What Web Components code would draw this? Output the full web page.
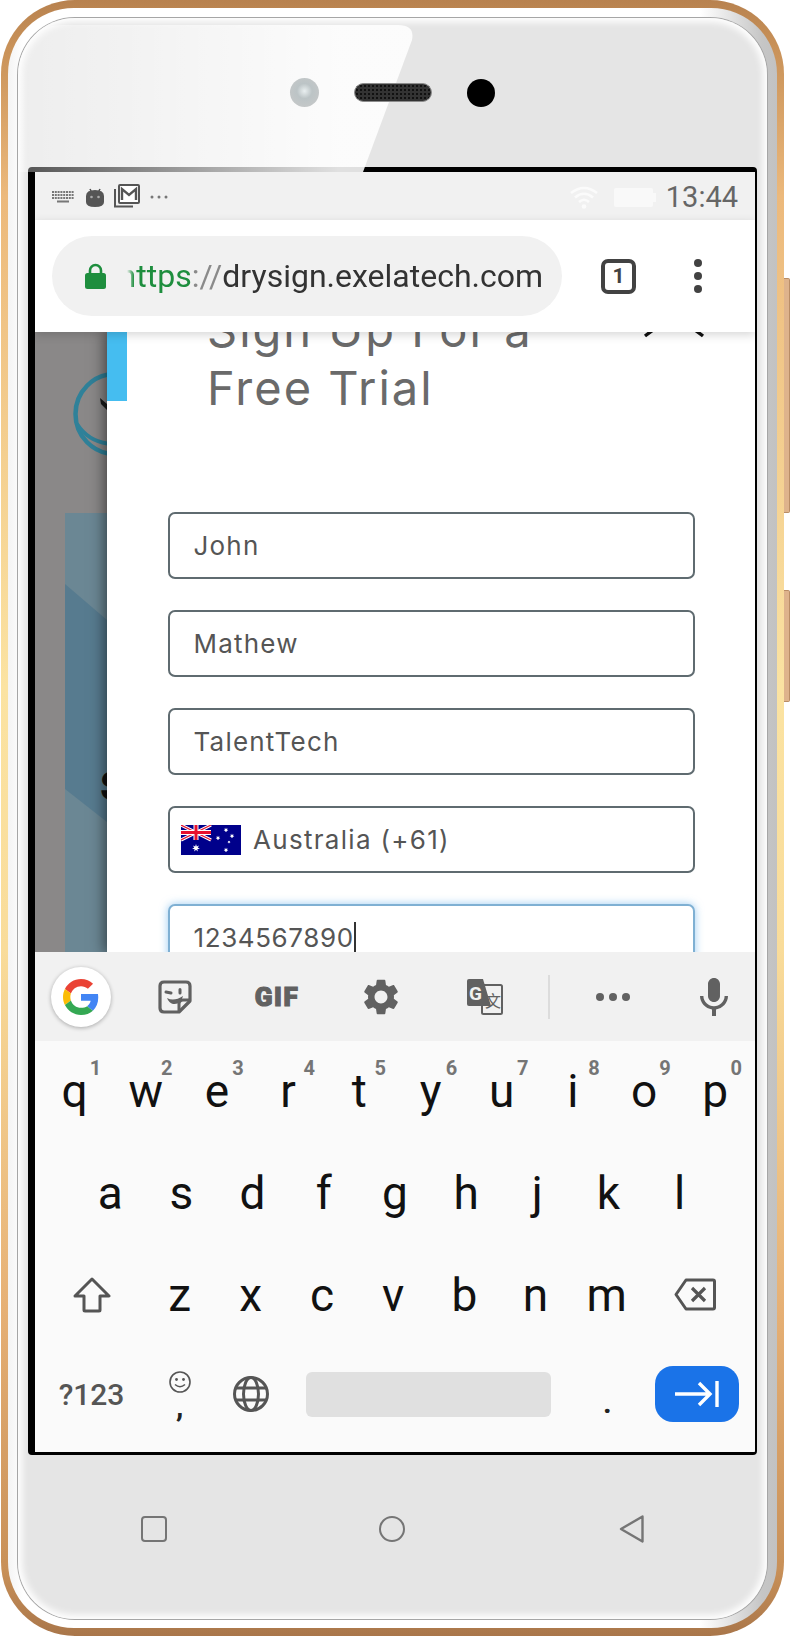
<!DOCTYPE html>
<html>
<head>
<meta charset="utf-8">
<title>Sign Up</title>
<style>
  html, body { margin: 0; padding: 0; background: #fff; }
  body { width: 791px; height: 1636px; overflow: hidden; font-family: Roboto, "Liberation Sans", sans-serif; }
</style>
</head>
<body>
<phone-shell>
  <status-bar></status-bar>
  <url-bar></url-bar>
  <page-view>
    <backdrop-strip></backdrop-strip>
    <signup-modal>
      <form-field>John</form-field>
      <form-field>Mathew</form-field>
      <form-field>TalentTech</form-field>
      <form-field flag>Australia (+61)</form-field>
      <form-field focused>1234567890</form-field>
    </signup-modal>
  </page-view>
  <soft-keyboard></soft-keyboard>
</phone-shell>

<script>
class PhoneShell extends HTMLElement {
    constructor() {
        super();
        this.attachShadow({ mode: 'open' });
    }

    connectedCallback() {
        this.shadowRoot.innerHTML = `
            <style>
                :host { display: block; position: relative; width: 784px; height: 1636px; }
                .gold {
                    box-sizing: border-box; height: 100%; margin-left: 1px; padding: 8px 7px; border-radius: 74px;
                    background: linear-gradient(180deg, #b8824f 0, #c99259 3%, #ecb97c 12%, #fbe3a2 42%, #f9dc9a 58%, #e6b075 80%, #c89058 96%, #a9764a 100%);
                }
                .silver {
                    box-sizing: border-box; height: 100%; padding: 10px 10px 9px; border-radius: 66px;
                    background: linear-gradient(90deg, #f4f4f4 0, #fff 2%, #fff 90%, #c6c6c6 98%, #c2c2c2 100%);
                }
                .bezel {
                    position: relative; box-sizing: border-box; height: 100%; overflow: hidden;
                    display: flex; flex-direction: column; align-items: center;
                    border-radius: 57px; background: #e5e5e5;
                    box-shadow: inset 0 0 7px 4px #fff, 0 0 0 1px #a6a6a6;
                }
                .top { flex: none; width: 100%; height: 149px; display: flex; align-items: center; justify-content: center; gap: 35px; }
                .lens { width: 29px; height: 29px; border-radius: 50%; background: radial-gradient(circle at 50% 45%, #e9eff0 0, #bcc4c6 35%, #c9c9c9 100%); z-index: 2; }
                .speaker {
                    width: 78px; height: 19px; border-radius: 10px; border: 1px solid #8d8d8d; box-sizing: border-box; z-index: 2;
                    background: #333 radial-gradient(circle, #111 1.1px, transparent 1.3px) 0 0 / 4px 4px;
                }
                .cam { width: 28px; height: 28px; border-radius: 50%; background: #000; z-index: 2; }
                .screen {
                    position: relative; flex: none; box-sizing: border-box; width: 729px; height: 1288px;
                    display: flex; flex-direction: column; overflow: hidden;
                    border: solid #000; border-width: 5px 2px 3px 7px; border-radius: 4px; background: #fff;
                }
                .gloss {
                    position: absolute; left: 0; top: 7px; width: 400px; height: 147px; z-index: 1;
                    background: linear-gradient(90deg, rgba(255,255,255,.32) 0, rgba(255,255,255,.88) 80%);
                    clip-path: path('M44 0 L380 0 Q397 0 394 15 L345 147 L0 147 L0 44 Q4 0 44 0 Z');
                }
                .bottom { flex: 1; width: 100%; display: flex; align-items: center; padding-bottom: 16px; box-sizing: border-box; }
                .recents { width: 26px; height: 26px; margin-left: 123px; box-sizing: border-box; border: 2.5px solid #757575; border-radius: 4px; }
                .home { width: 26px; height: 26px; margin-left: 212px; box-sizing: border-box; border: 2.5px solid #757575; border-radius: 50%; }
                .back { width: 25px; height: 28px; margin-left: 214px; }
                .side { position: absolute; right: -6px; width: 6px; background: #deb38c; border: 1px solid #b98d66; border-left: 0; box-sizing: border-box; border-radius: 0 2px 2px 0; }
            </style>
            <div class="gold"><div class="silver"><div class="bezel">
                <div class="gloss"></div>
                <div class="top">
                    <div class="lens"></div><div class="speaker"></div><div class="cam"></div>
                </div>
                <div class="screen"><slot></slot></div>
                <div class="bottom">
                    <div class="recents"></div>
                    <div class="home"></div>
                    <svg class="back" viewBox="0 0 25 28"><path d="M23.5 1.5 L2 14 L23.5 26.5 Z" fill="none" stroke="#757575" stroke-width="2.4" stroke-linejoin="round"/></svg>
                </div>
            </div></div></div>
            <div class="side" style="top:278px;height:235px"></div>
            <div class="side" style="top:590px;height:112px"></div>
        `;
    }
}

class StatusBar extends HTMLElement {
    constructor() {
        super();
        this.attachShadow({ mode: 'open' });
    }

    connectedCallback() {
        this.shadowRoot.innerHTML = `
            <style>
                :host { display: flex; flex: none; align-items: center; height: 48px; box-sizing: border-box; padding: 0 17px 0 17px; background: #f1f1f1; color: #666; }
                svg { display: block; flex: none; }
                .time { font: 400 29px Roboto, sans-serif; margin-left: 10px; line-height: 48px; margin-top: 2px; }
                .grow { flex: 1; }
            </style>
            <svg width="22" height="12" viewBox="0 0 22 12" style="margin-top:2px">
                <path d="M0 1H22M0 4H22M0 7H22" stroke="#777" stroke-width="2" stroke-dasharray="2 .8"/>
                <rect x="5" y="9.5" width="12" height="2" fill="#777"/>
            </svg>
            <svg width="18" height="21" viewBox="0 0 18 21" style="margin-left:12px">
                <path d="M4 3 L5.5 6 M14 3 L12.5 6" stroke="#555" stroke-width="1.6"/>
                <path d="M0 10 Q0 4 9 4 Q18 4 18 10 V16 Q18 21 9 21 Q0 21 0 16 Z" fill="#555"/>
                <circle cx="5.5" cy="11" r="1.3" fill="#aaa"/><circle cx="12.5" cy="11" r="1.3" fill="#aaa"/>
            </svg>
            <svg width="26" height="24" viewBox="0 0 26 24" style="margin-left:10px">
                <path d="M1 5 V22.5 H19" fill="none" stroke="#555" stroke-width="2"/>
                <rect x="5" y="1" width="20" height="18" rx="1" fill="#fff" stroke="#555" stroke-width="2"/>
                <path d="M8 16 V5 L15 11 L22 5 V16" fill="none" stroke="#555" stroke-width="2.4"/>
            </svg>
            <svg width="18" height="4" viewBox="0 0 18 4" style="margin-left:10px;margin-top:2px">
                <circle cx="2" cy="2" r="1.5" fill="#777"/><circle cx="9" cy="2" r="1.5" fill="#777"/><circle cx="16" cy="2" r="1.5" fill="#777"/>
            </svg>
            <div class="grow"></div>
            <svg width="28" height="23" viewBox="0 0 28 23" style="margin-top:2px">
                <path d="M1 7 Q14 -3 27 7 M5 11.5 Q14 4 23 11.5 M9 16 Q14 11.5 19 16" fill="none" stroke="#fbfbfb" stroke-width="2.6"/>
                <circle cx="14" cy="20.5" r="2.3" fill="#fbfbfb"/>
            </svg>
            <svg width="42" height="19" viewBox="0 0 42 19" style="margin-left:16px;margin-top:2px">
                <rect width="39" height="19" rx="2" fill="#f9f9f9"/><rect x="39" y="5" width="3" height="9" fill="#f9f9f9"/>
            </svg>
            <div class="time">13:44</div>
        `;
    }
}

class UrlBar extends HTMLElement {
    constructor() {
        super();
        this.attachShadow({ mode: 'open' });
    }

    connectedCallback() {
        this.shadowRoot.innerHTML = `
            <style>
                :host {
                    display: flex; flex: none; align-items: center; height: 112px; box-sizing: border-box;
                    padding: 0 0 0 17px; background: #fff; position: relative; z-index: 3;
                    box-shadow: 0 3px 9px rgba(0,0,0,.16);
                }
                .pill { display: flex; align-items: center; width: 510px; height: 80px; box-sizing: border-box; padding: 0 19px 0 33px; border-radius: 40px; background: #f1f1f1; }
                .url {
                    flex: 1; min-width: 0; margin-left: 21px; overflow: hidden; display: flex; justify-content: flex-end;
                    font: 400 32px/40px Roboto, sans-serif; white-space: nowrap; color: #333;
                    -webkit-mask-image: linear-gradient(90deg, transparent 0, #000 7px);
                }
                .url span { flex: none; }
                .https { color: #1e8e3e; }
                .sep { color: #8a8a8a; }
                .tab { flex: none; box-sizing: border-box; margin-left: 39px; width: 35px; height: 35px; border: 4px solid #424242; border-radius: 7px; display: flex; align-items: center; justify-content: center; font: 700 21px Roboto, sans-serif; color: #424242; }
                .menu { flex: none; margin-left: 58px; display: flex; flex-direction: column; gap: 5px; }
                .menu i { display: block; width: 8px; height: 8px; border-radius: 50%; background: #424242; }
                svg { flex: none; display: block; }
            </style>
            <div class="pill">
                <svg width="21" height="26" viewBox="0 0 21 26">
                    <path d="M5 11 V7.5 A5.5 5.5 0 0 1 16 7.5 V11" fill="none" stroke="#1e8e3e" stroke-width="2.6"/>
                    <rect y="10" width="21" height="16" rx="2.5" fill="#1e8e3e"/>
                </svg>
                <div class="url"><span><span class="https">https</span><span class="sep">://</span>drysign.exelatech.com</span></div>
            </div>
            <div class="tab">1</div>
            <div class="menu"><i></i><i></i><i></i></div>
        `;
    }
}

class PageView extends HTMLElement {
    constructor() {
        super();
        this.attachShadow({ mode: 'open' });
    }

    connectedCallback() {
        this.shadowRoot.innerHTML = `
            <style>
                :host { display: flex; flex: none; height: 620px; overflow: hidden; background: #8a8888; }
            </style>
            <slot></slot>
        `;
    }
}

class BackdropStrip extends HTMLElement {
    constructor() {
        super();
        this.attachShadow({ mode: 'open' });
    }

    connectedCallback() {
        this.shadowRoot.innerHTML = `
            <style>
                :host { display: flex; flex: none; flex-direction: column; width: 72px; height: 620px; overflow: hidden; }
                .logo { flex: none; height: 181px; }
                .band { flex: 1; margin-left: 30px; display: block; }
            </style>
            <svg class="logo" width="72" height="181" viewBox="0 0 72 181">
                <ellipse cx="80" cy="82" rx="39.5" ry="40" fill="none" stroke="#2f8199" stroke-width="4.5"/>
                <path d="M42 92 Q55 112 80 112" fill="none" stroke="#2f8199" stroke-width="4"/>
                <path d="M65 66 L72 72 L72 78 L66 72 Z" fill="#1a1a1a"/>
            </svg>
            <svg class="band" width="42" height="439" viewBox="0 0 42 439">
                <rect width="42" height="439" fill="#6b8794"/>
                <path d="M0 71 L42 107 V309 L0 276 Z" fill="#577b8f"/>
                <text x="35" y="287" font-family="Inter, sans-serif" font-weight="800" font-size="40" fill="#111">S</text>
            </svg>
        `;
    }
}

class SignupModal extends HTMLElement {
    constructor() {
        super();
        this.attachShadow({ mode: 'open' });
    }

    connectedCallback() {
        this.shadowRoot.innerHTML = `
            <style>
                :host {
                    display: block; position: relative; flex: none; width: 648px; height: 620px; box-sizing: border-box;
                    padding: 0 60.5px 0 60.5px; background: #fff; box-shadow: 0 0 14px 2px rgba(0,0,0,.55);
                }
                .tab { position: absolute; left: 0; top: 0; width: 20px; height: 69px; background: #45bdf0; }
                .close { position: absolute; left: 530px; top: -30px; }
                h1 {
                    margin: -31px 0 95px 39.5px; font: 400 47px/58px Inter, sans-serif; letter-spacing: 2px; color: #6a6a6a;
                }
                .fields { display: flex; flex-direction: column; gap: 31px; }
            </style>
            <div class="tab"></div>
            <svg class="close" width="80" height="36" viewBox="0 0 80 36">
                <path d="M16 28 L8 34 M58 28 L66 34" stroke="#111" stroke-width="3.4" fill="none"/>
            </svg>
            <h1>Sign Up For a<br>Free Trial</h1>
            <div class="fields"><slot></slot></div>
        `;
    }
}

class FormField extends HTMLElement {
    constructor() {
        super();
        this.attachShadow({ mode: 'open' });
    }

    star(cx, cy, r) {
        let pts = [];
        for (let i = 0; i < 14; i++) {
            const rad = i % 2 ? r * 0.45 : r;
            const a = i * Math.PI / 7 - Math.PI / 2;
            pts.push((cx + rad * Math.cos(a)).toFixed(2) + ',' + (cy + rad * Math.sin(a)).toFixed(2));
        }
        return `<polygon points="${pts.join(' ')}" fill="#fff"/>`;
    }

    flag() {
        return `
            <svg class="flag" width="60" height="30" viewBox="0 0 60 30">
                <rect width="60" height="30" fill="#00008b"/>
                <path d="M0 0 L30 15 M30 0 L0 15" stroke="#fff" stroke-width="3.2"/>
                <path d="M0 0 L30 15 M30 0 L0 15" stroke="#e8112d" stroke-width="1.2"/>
                <path d="M15 0 V15 M0 7.5 H30" stroke="#fff" stroke-width="5"/>
                <path d="M15 0 V15 M0 7.5 H30" stroke="#e8112d" stroke-width="3"/>
                ${this.star(15, 23, 4)}${this.star(45, 5, 2.4)}${this.star(37, 13, 2.4)}
                ${this.star(51, 11, 2.4)}${this.star(48, 17, 1.6)}${this.star(45, 25, 2.4)}
            </svg>`;
    }

    connectedCallback() {
        const focused = this.hasAttribute('focused');
        this.shadowRoot.innerHTML = `
            <style>
                :host { display: block; }
                .box {
                    box-sizing: border-box; height: 67px; display: flex; align-items: center; padding: 0 0 0 24px;
                    border: 2px solid #5f6b70; border-radius: 7px; background: #fff;
                    font: 400 26px Inter, sans-serif; letter-spacing: 1.2px; color: #555;
                }
                .box.flagged { padding-left: 11.5px; letter-spacing: 1.3px; }
                .box.focus { border-color: #7fb0d3; box-shadow: 0 0 9px rgba(102,175,233,.65); letter-spacing: .6px; }
                .flag { display: block; flex: none; margin-right: 12px; }
                .caret { display: inline-block; width: 2px; height: 32px; margin-left: 0; background: #333; }
            </style>
            <div class="box ${focused ? 'focus' : ''} ${this.hasAttribute('flag') ? 'flagged' : ''}">
                ${this.hasAttribute('flag') ? this.flag() : ''}
                <slot></slot>${focused ? '<span class="caret"></span>' : ''}
            </div>
        `;
    }
}

class KbKey extends HTMLElement {
    constructor() {
        super();
        this.attachShadow({ mode: 'open' });
    }

    connectedCallback() {
        const hint = this.getAttribute('hint');
        this.shadowRoot.innerHTML = `
            <style>
                :host { display: flex; position: relative; align-items: center; justify-content: center; height: 100%; min-width: 0; font: 400 46px Roboto, sans-serif; color: #111; }
                .hint { position: absolute; top: 17px; left: calc(50% + 21px); transform: translateX(-50%); font: 700 20px/20px Roboto, sans-serif; color: #757575; }
            </style>
            ${this.getAttribute('label') || ''}<slot></slot>
            ${hint ? `<span class="hint">${hint}</span>` : ''}
        `;
    }
}

class SoftKeyboard extends HTMLElement {
    constructor() {
        super();
        this.attachShadow({ mode: 'open' });
    }

    keys(letters, hints) {
        return letters.split('').map((c, i) =>
            `<kb-key label="${c}"${hints ? ` hint="${hints[i]}"` : ''}></kb-key>`).join('');
    }

    connectedCallback() {
        this.shadowRoot.innerHTML = `
            <style>
                :host { display: flex; flex: none; flex-direction: column; height: 500px; background: #fafafa; position: relative; z-index: 2; }
                svg { display: block; flex: none; }
                .strip { flex: none; height: 89px; display: flex; align-items: center; background: #f1f1f1; padding-left: 16px; box-sizing: border-box; }
                .g { flex: none; width: 60px; height: 60px; border-radius: 50%; background: #fff; box-shadow: 0 1px 4px rgba(0,0,0,.3); display: flex; align-items: center; justify-content: center; }
                .gif { flex: none; width: 48px; font: 900 26px/34px Roboto, sans-serif; letter-spacing: 1.6px; color: #616161; -webkit-text-stroke: 1.2px #616161; text-align: center; }
                .divider { flex: none; width: 2px; height: 44px; background: #dcdcdc; }
                .rows { flex: 1; padding: 0 4px; }
                .row { height: 102px; display: grid; box-sizing: border-box; padding-bottom: 3px; }
                .r1 { grid-template-columns: repeat(10, 71.2px); }
                .r2 { grid-template-columns: repeat(9, 71.2px); padding-left: 35.6px; }
                .r3 { grid-template-columns: 105px repeat(7, 71.2px) 106px; }
                .r4 { grid-template-columns: 105px 71.2px 71.2px 285px 72px 107px; padding-bottom: 8px; }
                .sym { font: 500 30px Roboto, sans-serif; color: #555; }
                .emoji { display: flex; flex-direction: column; align-items: center; }
                .comma { font: 700 30px/20px Roboto, sans-serif; color: #222; margin-top: 4px; height: 20px; }
                .space { height: 45px; width: 245px; background: #e0e0e0; border-radius: 6px; }
                .enter { width: 84px; height: 56px; border-radius: 18px; background: #1a73e8; display: flex; align-items: center; justify-content: center; }
                .dot { font: 700 30px Roboto, sans-serif; color: #222; padding-top: 16px; }
            </style>
            <div class="strip">
                <div class="g">
                    <svg width="36" height="36" viewBox="0 0 48 48">
                        <path fill="#EA4335" d="M24 9.5c3.54 0 6.71 1.22 9.21 3.6l6.85-6.85C35.9 2.38 30.47 0 24 0 14.62 0 6.51 5.38 2.56 13.22l7.98 6.19C12.43 13.72 17.74 9.5 24 9.5z"/>
                        <path fill="#4285F4" d="M46.98 24.55c0-1.57-.15-3.09-.38-4.55H24v9.02h12.94c-.58 2.96-2.26 5.48-4.78 7.18l7.73 6c4.51-4.18 7.09-10.36 7.09-17.65z"/>
                        <path fill="#FBBC05" d="M10.53 28.59c-.48-1.45-.76-2.99-.76-4.59s.27-3.14.76-4.59l-7.98-6.19C.92 16.46 0 20.12 0 24c0 3.88.92 7.54 2.56 10.78l7.97-6.19z"/>
                        <path fill="#34A853" d="M24 48c6.48 0 11.93-2.13 15.89-5.81l-7.73-6c-2.15 1.45-4.92 2.3-8.16 2.3-6.26 0-11.57-4.22-13.47-9.91l-7.98 6.19C6.51 42.62 14.62 48 24 48z"/>
                    </svg>
                </div>
                <svg style="margin-left:47px" width="34" height="34" viewBox="0 0 34 34">
                    <path d="M6 2 H28 Q32 2 32 6 V21 L21 32 H6 Q2 32 2 28 V6 Q2 2 6 2 Z" fill="none" stroke="#616161" stroke-width="3.2" stroke-linejoin="round"/>
                    <path d="M32 20 H25 Q21 20 21 24 V32" fill="none" stroke="#616161" stroke-width="3"/>
                    <path d="M8 12 L13 13 M22 9.5 V13" stroke="#616161" stroke-width="3" stroke-linecap="round"/>
                    <path d="M9 18 Q16 22 25 16 Q23 25 15 24 Q11 23 9 18 Z" fill="#616161"/>
                </svg>
                <div class="gif" style="margin-left:61px">GIF</div>
                <svg style="margin-left:62px" width="36" height="36" viewBox="2 2 20 20"><path fill="#616161" d="M19.14 12.94c.04-.3.06-.61.06-.94 0-.32-.02-.64-.07-.94l2.03-1.58c.18-.14.23-.41.12-.61l-1.92-3.32c-.12-.22-.37-.29-.59-.22l-2.39.96c-.5-.38-1.03-.7-1.62-.94l-.36-2.54c-.04-.24-.24-.41-.48-.41h-3.84c-.24 0-.43.17-.47.41l-.36 2.54c-.59.24-1.13.57-1.62.94l-2.39-.96c-.22-.08-.47 0-.59.22L2.74 8.87c-.12.21-.08.47.12.61l2.03 1.58c-.05.3-.09.63-.09.94s.02.64.07.94l-2.03 1.58c-.18.14-.23.41-.12.61l1.92 3.32c.12.22.37.29.59.22l2.39-.96c.5.38 1.03.7 1.62.94l.36 2.54c.05.24.24.41.48.41h3.84c.24 0 .44-.17.47-.41l.36-2.54c.59-.24 1.13-.56 1.62-.94l2.39.96c.22.08.47 0 .59-.22l1.92-3.32c.12-.22.07-.47-.12-.61l-2.01-1.58zM12 15.6c-1.98 0-3.6-1.62-3.6-3.6s1.62-3.6 3.6-3.6 3.6 1.62 3.6 3.6-1.62 3.6-3.6 3.6z"/></svg>
                <svg style="margin-left:68px" width="36" height="36" viewBox="0 0 36 36">
                    <rect x="15" y="6" width="20" height="29" rx="1.5" fill="#f1f1f1" stroke="#616161" stroke-width="2"/>
                    <path d="M2 0 H16 L24 27 H2 Q0 27 0 25 V2 Q0 0 2 0 Z" fill="#616161"/>
                    <text x="2" y="21" font-family="Roboto, sans-serif" font-weight="700" font-size="19" fill="#f1f1f1">G</text>
                    <text x="18" y="28" font-family="'Noto Sans CJK SC', sans-serif" font-size="16" fill="#616161">文</text>
                </svg>
                <div class="divider" style="margin-left:45px"></div>
                <svg style="margin-left:46px" width="34" height="8" viewBox="0 0 34 8"><circle cx="4" cy="4" r="4" fill="#616161"/><circle cx="17" cy="4" r="4" fill="#616161"/><circle cx="30" cy="4" r="4" fill="#616161"/></svg>
                <svg style="margin-left:66px" width="36" height="42" viewBox="3 1 18 21"><path fill="#616161" d="M12 14c1.66 0 2.99-1.34 2.99-3L15 5c0-1.66-1.34-3-3-3S9 3.34 9 5v6c0 1.66 1.34 3 3 3zm5.3-3c0 3-2.54 5.1-5.3 5.1S6.7 14 6.7 11H5c0 3.41 2.72 6.23 6 6.72V21h2v-3.28c3.28-.48 6-3.3 6-6.72h-1.7z"/></svg>
            </div>
            <div class="rows">
                <div class="row r1">${this.keys('qwertyuiop', '1234567890')}</div>
                <div class="row r2">${this.keys('asdfghjkl')}</div>
                <div class="row r3">
                    <kb-key><svg width="38" height="36" viewBox="0 0 38 36"><path d="M19 2 L36 19 H27 V33 Q27 34 26 34 H12 Q11 34 11 33 V19 H2 Z" fill="none" stroke="#555" stroke-width="3" stroke-linejoin="round"/></svg></kb-key>
                    ${this.keys('zxcvbnm')}
                    <kb-key><svg width="42" height="33" viewBox="0 0 42 33"><path d="M12 2 H39 Q40.5 2 40.5 3.5 V29.5 Q40.5 31 39 31 H12 L2 16.5 Z" fill="none" stroke="#555" stroke-width="3" stroke-linejoin="round"/><path d="M18 10 L31 23 M31 10 L18 23" stroke="#555" stroke-width="3.2"/></svg></kb-key>
                </div>
                <div class="row r4">
                    <kb-key><span class="sym">?123</span></kb-key>
                    <kb-key>
                        <div class="emoji">
                            <svg width="22" height="22" viewBox="0 0 22 22"><circle cx="11" cy="11" r="10" fill="none" stroke="#555" stroke-width="1.6"/><circle cx="7.5" cy="8.5" r="1.4" fill="#555"/><circle cx="14.5" cy="8.5" r="1.4" fill="#555"/><path d="M6 13.5 Q11 18 16 13.5" fill="none" stroke="#555" stroke-width="1.6"/></svg>
                            <div class="comma">,</div>
                        </div>
                    </kb-key>
                    <kb-key><svg width="36" height="36" viewBox="0 0 36 36" fill="none" stroke="#555" stroke-width="3"><circle cx="18" cy="18" r="16.5"/><ellipse cx="18" cy="18" rx="7.5" ry="16.5"/><path d="M3 12 H33 M3 24 H33"/></svg></kb-key>
                    <kb-key><div class="space"></div></kb-key>
                    <kb-key><span class="dot">.</span></kb-key>
                    <kb-key><div class="enter"><svg width="44" height="26" viewBox="0 0 44 26" fill="none" stroke="#fff" stroke-width="3.4"><path d="M0 13 H35 M24 2 L35 13 L24 24"/><path d="M42 0 V26"/></svg></div></kb-key>
                </div>
            </div>
        `;
    }
}

customElements.define('phone-shell', PhoneShell);
customElements.define('status-bar', StatusBar);
customElements.define('url-bar', UrlBar);
customElements.define('page-view', PageView);
customElements.define('backdrop-strip', BackdropStrip);
customElements.define('signup-modal', SignupModal);
customElements.define('form-field', FormField);
customElements.define('kb-key', KbKey);
customElements.define('soft-keyboard', SoftKeyboard);
</script>
</body>
</html>
